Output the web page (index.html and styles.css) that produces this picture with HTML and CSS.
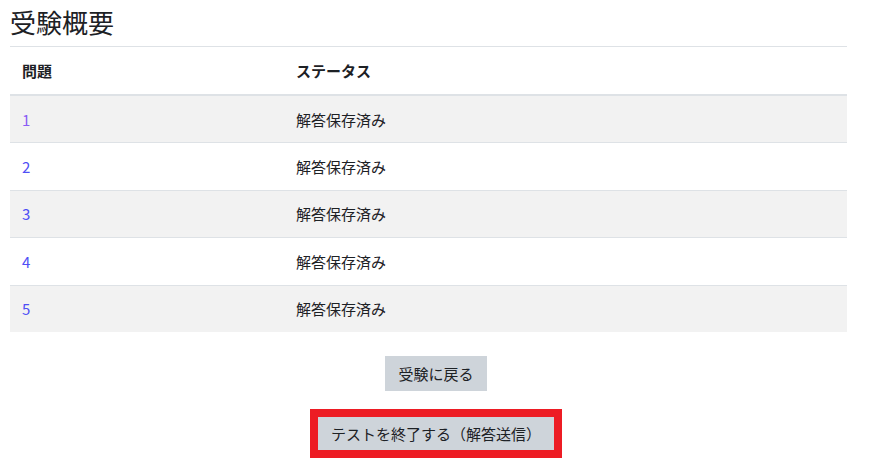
FILE: index.html
```html
<!DOCTYPE html>
<html lang="ja">

<head>
  <meta charset="UTF-8">
  <title>受験概要</title>

  <link rel="stylesheet" href="styles.css">

</head>

<body>
  <div id="sayfa">
    <h2 class="baslik">受験概要</h2>
    <table class="ozet">
      <thead>
        <tr>
          <th class="no">問題</th>
          <th>ステータス</th>
        </tr>
      </thead>
      <tbody>
        <tr class="tek"><td class="no"><a class="ziyaret" href="#">1</a></td><td>解答保存済み</td></tr>
        <tr><td class="no"><a href="#">2</a></td><td>解答保存済み</td></tr>
        <tr class="tek"><td class="no"><a href="#">3</a></td><td>解答保存済み</td></tr>
        <tr><td class="no"><a href="#">4</a></td><td>解答保存済み</td></tr>
        <tr class="tek"><td class="no"><a href="#">5</a></td><td>解答保存済み</td></tr>
      </tbody>
    </table>
    <div class="dugmeler">
      <button class="dugme">受験に戻る</button>
      <div class="vurgu">
        <button class="dugme">テストを終了する（解答送信）</button>
      </div>
    </div>
  </div>
</body>

</html>
```

FILE: styles.css
```css
/* genel */
body {
  margin: 0;
  background-color: #fff;
  color: #1d2125;
  font-family: "Noto Sans CJK JP", "Noto Sans", sans-serif;
  font-size: 15px;
}

#sayfa {
  padding: 4px 10px 0 10px;
}

.baslik {
  margin: 0;
  width: 837px;
  font-size: 26px;
  font-weight: normal;
  line-height: 36px;
  padding-bottom: 6px;
  border-bottom: 1px solid #dee2e6;
}

/* tablo */
.ozet {
  width: 837px;
  border-collapse: collapse;
}

.ozet th {
  text-align: left;
  font-weight: bold;
  height: 47px;
  padding: 0 12px;
  border-bottom: 2px solid #dee2e6;
}

.ozet td {
  height: 46.4px;
  padding: 0 12px;
  border-bottom: 1px solid #dee2e6;
}

.ozet tbody tr:last-child td {
  border-bottom: none;
}

.ozet .no {
  width: 250px;
}

.ozet tr.tek {
  background-color: #f2f2f2;
}

.ozet a {
  color: #4f4ff5;
  text-decoration: none;
}

.ozet a.ziyaret {
  color: #8a5cf5;
}

/* dugmeler */
.dugmeler {
  width: 852px;
  display: flex;
  flex-direction: column;
  align-items: center;
  padding-top: 24px;
  gap: 18px;
}

.dugme {
  font-family: inherit;
  font-size: 15px;
  color: #1d2125;
  background-color: #ced4da;
  border: none;
  border-radius: 0;
  height: 35px;
  padding: 0 13px;
}

.vurgu {
  border: 8px solid #ed1c24;
}

.vurgu .dugme {
  height: 33px;
  padding: 0 13px;
  display: block;
}
```
